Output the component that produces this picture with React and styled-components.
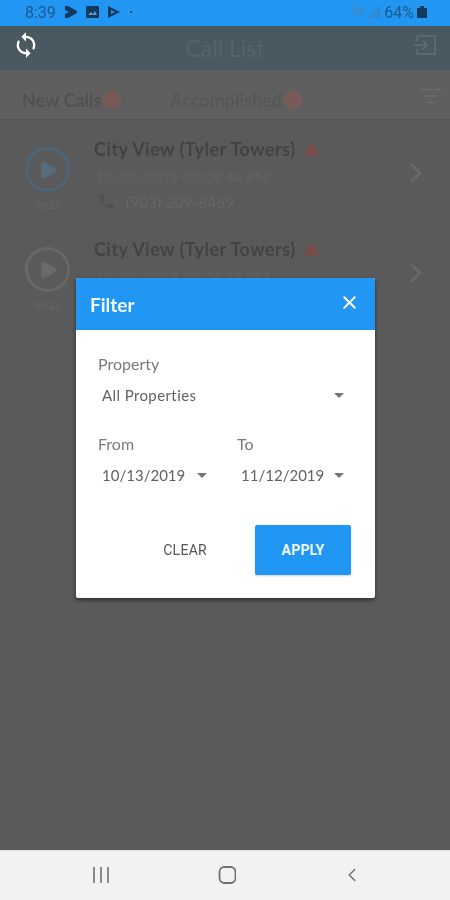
import React from 'react';
import styled, { createGlobalStyle } from 'styled-components';
import { X, Play, ChevronRight, ChevronLeft, TriangleAlert, ListFilter, Wifi } from 'lucide-react';
import { MdSync, MdPhone } from 'react-icons/md';

const GlobalStyle = createGlobalStyle`
  html, body {
    margin: 0;
    padding: 0;
    background: #5a5a5a;
  }
  * {
    box-sizing: border-box;
  }
`;

const Screen = styled.div`
  position: relative;
  display: flex;
  flex-direction: column;
  width: 450px;
  height: 900px;
  overflow: hidden;
  font-family: Lato, "Liberation Sans", sans-serif;
  background: #5a5a5a;
`;

const StatusBar = styled.div`
  display: flex;
  align-items: center;
  justify-content: space-between;
  height: 26px;
  padding: 0 23px 2px 25px;
  background: #2196f3;
  color: #1d5a8c;
  font-family: Roboto, sans-serif;
  font-size: 16px;
`;

const StatusGroup = styled.div`
  display: flex;
  align-items: center;
  gap: ${(p) => p.$gap || 9}px;
  filter: blur(0.3px);
`;

const Header = styled.div`
  display: flex;
  align-items: center;
  justify-content: space-between;
  height: 44px;
  padding: 0 14px 6px 12px;
  background: #4a5961;
`;

const HeaderTitle = styled.div`
  margin: 6px 4px 0 0;
  font-size: 23px;
  color: #55636b;
  filter: blur(0.6px);
`;

const Tabs = styled.div`
  display: flex;
  align-items: center;
  height: 51px;
  padding: 10px 8px 0 22px;
  background: #5f5f5f;
  border-bottom: 2px solid #565656;
`;

const Tab = styled.div`
  display: flex;
  align-items: center;
  gap: 2px;
  width: ${(p) => p.$width}px;
  font-size: 18px;
  font-weight: 700;
  color: ${(p) => p.$color};
  filter: blur(0.7px);
`;

const Badge = styled.span`
  width: 18px;
  height: 18px;
  border-radius: 50%;
  background: #7a5a58;
`;

const FilterIcon = styled(ListFilter)`
  margin-top: -7px;
  filter: blur(0.5px);
`;

const CallRow = styled.div`
  display: flex;
  height: 100px;
  padding: 18px 18px 0 25px;
`;

const CallLeft = styled.div`
  display: flex;
  flex-direction: column;
  align-items: center;
  width: 45px;
  margin-top: 8px;
`;

const PlayCircle = styled.div`
  display: flex;
  align-items: center;
  justify-content: center;
  width: 45px;
  height: 45px;
  border-radius: 50%;
  border: 3px solid ${(p) => p.$color};
  color: ${(p) => p.$fill};
  filter: blur(0.6px);
`;

const Duration = styled.div`
  margin-top: 7px;
  font-size: 10px;
  line-height: 12px;
  color: #666;
  filter: blur(0.6px);
`;

const CallBody = styled.div`
  flex: 1;
  margin-left: 24px;
`;

const CallTitle = styled.div`
  display: flex;
  align-items: center;
  gap: 8px;
  height: 20px;
  font-size: 18px;
  font-weight: 700;
  letter-spacing: 0.45px;
  color: #434343;
  filter: blur(0.5px);
`;

const CallDate = styled.div`
  margin: 9px 0 0 2px;
  font-size: 15px;
  line-height: 18px;
  color: #646464;
  filter: blur(0.8px);
`;

const CallPhone = styled.div`
  display: flex;
  align-items: center;
  gap: 10px;
  margin: 6px 0 0 3px;
  font-size: 15px;
  line-height: 18px;
  letter-spacing: 0.3px;
  color: #666;
  filter: blur(0.7px);
`;

const CallArrow = styled.div`
  display: flex;
  align-items: center;
  height: 68px;
  color: #696969;
  filter: blur(0.5px);
`;

const Spacer = styled.div`
  flex: 1;
`;

const NavBar = styled.div`
  display: flex;
  align-items: center;
  justify-content: space-between;
  height: 50px;
  padding: 0 87px 2px 92px;
  background: #f2f2f2;
  border-top: 1px solid #dcdcdc;
  color: #707070;
`;

const Modal = styled.div`
  position: absolute;
  top: 278px;
  left: 76px;
  width: 299px;
  height: 320px;
  border-radius: 2px;
  background: #fff;
  box-shadow: 0 2px 4px rgba(0, 0, 0, 0.5);
  overflow: hidden;
`;

const ModalHeader = styled.div`
  display: flex;
  align-items: center;
  justify-content: space-between;
  height: 52px;
  padding: 0 15px 4px 14px;
  background: #2196f3;
  color: #fff;
`;

const ModalTitle = styled.div`
  margin-top: 4px;
  font-size: 19px;
  font-weight: 700;
  color: #f2f9ff;
  filter: blur(0.3px);
`;

const ModalBody = styled.div`
  padding: 24px 22px 0;
`;

const FieldLabel = styled.div`
  font-size: 16px;
  line-height: 20px;
  color: #7a7a7a;
  filter: blur(0.3px);
`;

const SelectBox = styled.div`
  display: flex;
  align-items: center;
  justify-content: space-between;
  width: ${(p) => p.$width || 'auto'};
  height: 32px;
  margin-top: 5px;
  padding: 0 9px 0 4px;
  font-size: 15px;
  letter-spacing: ${(p) => p.$spacing || 0.4}px;
  color: #626262;
`;

const SelectText = styled.span`
  filter: blur(0.3px);
`;

const Caret = styled.span`
  width: 0;
  height: 0;
  border-left: 5px solid transparent;
  border-right: 5px solid transparent;
  border-top: 5px solid #757575;
`;

const DateRow = styled.div`
  display: grid;
  grid-template-columns: 139px 116px;
  margin-top: 23px;
`;

const ModalActions = styled.div`
  display: flex;
  align-items: center;
  justify-content: flex-end;
  margin: 34px 2px 0 0;
  gap: 48px;
`;

const ClearButton = styled.div`
  font-family: Roboto, sans-serif;
  font-size: 14px;
  letter-spacing: 0.3px;
  color: #555;
  filter: blur(0.3px);
`;

const ApplyButton = styled.div`
  display: flex;
  align-items: center;
  justify-content: center;
  width: 96px;
  height: 50px;
  border-radius: 2px;
  background: #2196f3;
  box-shadow: 0 1px 2px rgba(0, 0, 0, 0.2);
  font-family: Roboto, sans-serif;
  font-size: 14px;
  font-weight: 700;
  letter-spacing: 0.2px;
  color: #eef7ff;
`;

const calls = [
  { date: '10/05/2019 05:04:44 PM', phone: '(903) 209-8469', color: '#4b6579', fill: '#566c7d' },
  { date: '10/05/2019 05:04:44 PM', color: '#686868', fill: '#6a6a6a' },
];

const App = () => (
  <Screen>
    <GlobalStyle />
    <StatusBar>
      <StatusGroup>
        8:39
        <svg width="12" height="12" viewBox="0 0 12 12">
          <path d="M0 0h3l9 5v2l-9 5H0V8l4-2-4-2z" fill="#123a5e" />
        </svg>
        <svg width="13" height="12" viewBox="0 0 13 12">
          <rect width="13" height="12" rx="1" fill="#123a5e" />
          <path d="M2 9l3-3 2 2 2-3 2 4z" fill="#5e9ccc" />
        </svg>
        <svg width="12" height="12" viewBox="0 0 12 12">
          <path d="M0 0l12 6-12 6zM3 4v4l4-2z" fill="#123a5e" fillRule="evenodd" />
        </svg>
        <svg width="4" height="12" viewBox="0 0 4 12">
          <circle cx="2" cy="6" r="1" fill="#123a5e" />
        </svg>
      </StatusGroup>
      <StatusGroup $gap={3}>
        <Wifi size={16} color="#4a86b6" />
        <svg width="12" height="14" viewBox="0 0 12 14">
          <path d="M1 13V10M4 13V8M7 13V5M10 13V1" stroke="#3f7dae" strokeWidth="1.3" />
        </svg>
        <span>64%</span>
        <svg width="10" height="12" viewBox="0 0 10 12">
          <path d="M3 0h4v2h3v10H0V2h3z" fill="#123a5e" />
        </svg>
      </StatusGroup>
    </StatusBar>
    <Header>
      <MdSync size={28} color="#fff" />
      <HeaderTitle>Call List</HeaderTitle>
      <svg width="22" height="20" viewBox="0 0 22 20" fill="none" stroke="#5f6c74" strokeWidth="1.7">
        <path d="M3 1h18v18H3v-5M3 6V1M0 10h13M9 6l4 4-4 4" />
      </svg>
    </Header>
    <Tabs>
      <Tab $width={148} $color="#515151">New Calls<Badge /></Tab>
      <Tab $width={250} $color="#575757">Accomplished<Badge /></Tab>
      <FilterIcon size={22} color="#6b6b6b" />
    </Tabs>
    {calls.map((call, i) => (
      <CallRow key={i}>
        <CallLeft>
          <PlayCircle $color={call.color} $fill={call.fill}>
            <Play size={20} fill={call.fill} />
          </PlayCircle>
          <Duration>00:22</Duration>
        </CallLeft>
        <CallBody>
          <CallTitle>
            City View (Tyler Towers)
            <TriangleAlert size={15} color="#7a4c4a" fill="#7a4c4a" />
          </CallTitle>
          <CallDate>{call.date}</CallDate>
          {call.phone && (
            <CallPhone>
              <MdPhone size={19} color="#505050" />
              {call.phone}
            </CallPhone>
          )}
        </CallBody>
        <CallArrow>
          <ChevronRight size={32} strokeWidth={2} />
        </CallArrow>
      </CallRow>
    ))}
    <Spacer />
    <NavBar>
      <svg width="18" height="18" viewBox="0 0 18 18">
        <path d="M2 1v16M9 1v16M16 1v16" stroke="#707070" strokeWidth="1.6" />
      </svg>
      <svg width="20" height="18" viewBox="0 0 20 18">
        <rect x="3.5" y="1" width="16" height="16" rx="5" fill="none" stroke="#707070" strokeWidth="1.8" />
      </svg>
      <ChevronLeft size={22} strokeWidth={1.6} />
    </NavBar>
    <Modal>
      <ModalHeader>
        <ModalTitle>Filter</ModalTitle>
        <X size={21} strokeWidth={2.2} />
      </ModalHeader>
      <ModalBody>
        <FieldLabel>Property</FieldLabel>
        <SelectBox><SelectText>All Properties</SelectText><Caret /></SelectBox>
        <DateRow>
          <div>
            <FieldLabel>From</FieldLabel>
            <SelectBox $width="118px" $spacing={0.01}><SelectText>10/13/2019</SelectText><Caret /></SelectBox>
          </div>
          <div>
            <FieldLabel>To</FieldLabel>
            <SelectBox $spacing={0.01}><SelectText>11/12/2019</SelectText><Caret /></SelectBox>
          </div>
        </DateRow>
        <ModalActions>
          <ClearButton>CLEAR</ClearButton>
          <ApplyButton>APPLY</ApplyButton>
        </ModalActions>
      </ModalBody>
    </Modal>
  </Screen>
);

export default App;
